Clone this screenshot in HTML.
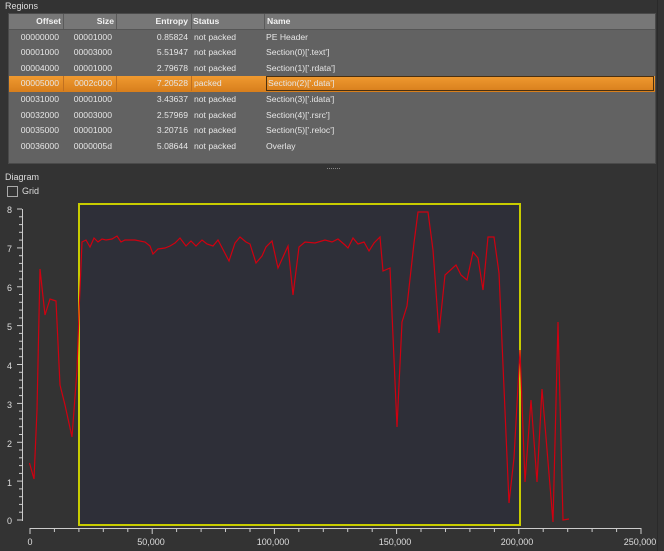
<!DOCTYPE html>
<html><head><meta charset="utf-8"><style>
body{margin:0;width:664px;height:551px;background:#333;font-family:"Liberation Sans",sans-serif;font-size:9px;color:#e6e6e6;position:relative;overflow:hidden}
.lbl{position:absolute;font-size:9px;color:#ddd}
#tbl{position:absolute;left:8px;top:13px;width:648px;height:151px;background:#626262;border:1px solid #4a4a4a;box-sizing:border-box;font-size:8.6px}
.hdr{position:absolute;left:0;top:0;width:100%;height:15px;background:#777;border-bottom:1px solid #555;font-weight:bold;color:#f2f2f2}
.row{position:absolute;left:0;width:100%;height:15.6px}
.c{position:absolute;top:2px;white-space:nowrap}
.sel{background:linear-gradient(#f09a30,#d77e1c)}
</style></head><body>
<div class="lbl" style="left:5px;top:1px">Regions</div>
<div id="tbl">
<div class="hdr">
<div class="c" style="right:594px">Offset</div>
<div class="c" style="right:541px">Size</div>
<div class="c" style="right:467px">Entropy</div>
<div class="c" style="left:184px">Status</div>
<div class="c" style="left:258px">Name</div>
<div style="position:absolute;left:54px;top:0;width:1px;height:15px;background:#5a5a5a"></div>
<div style="position:absolute;left:107px;top:0;width:1px;height:15px;background:#5a5a5a"></div>
<div style="position:absolute;left:182px;top:0;width:1px;height:15px;background:#5a5a5a"></div>
<div style="position:absolute;left:255px;top:0;width:1px;height:15px;background:#5a5a5a"></div>
</div>
</div>
<div style="position:absolute;left:327px;top:168px;width:13px;border-top:1px dotted #888"></div>
<div class="lbl" style="left:5px;top:172px">Diagram</div>
<div style="position:absolute;left:7px;top:186px;width:9px;height:9px;border:1px solid #aaa"></div>
<div class="lbl" style="left:22px;top:186px">Grid</div>
<div style="position:absolute;left:657px;top:0;width:1px;height:551px;background:#2a2a2a"></div>
<svg width="664" height="551" style="position:absolute;left:0;top:0" font-family="Liberation Sans" font-size="9" fill="#ddd">
<rect x="79" y="204" width="441" height="321" fill="#2e2f38" stroke="#c8cc00" stroke-width="2"/>
<g stroke="#ccc" stroke-width="1">
<line x1="22.5" y1="209" x2="22.5" y2="521"/>
<line x1="30" y1="528.5" x2="641" y2="528.5"/>
</g>
<g id="yt" stroke="#ccc"></g>
<g id="xt" stroke="#ccc"></g>
<g text-anchor="middle">
<text x="30" y="545">0</text><text x="151" y="545">50,000</text><text x="273" y="545">100,000</text><text x="395" y="545">150,000</text><text x="517" y="545">200,000</text><text x="640" y="545">250,000</text>
</g>
<g>
<text x="7" y="213">8</text><text x="7" y="252">7</text><text x="7" y="291">6</text><text x="7" y="330">5</text><text x="7" y="369">4</text><text x="7" y="408">3</text><text x="7" y="447">2</text><text x="7" y="486">1</text><text x="7" y="524">0</text>
</g>
<polyline fill="none" stroke="#d00010" stroke-width="1.2" points="29.5,463 34,479 37,410 40,269 45,315 50,299 56,301 60,385 65,405 72,437 77,370 79,312 82,242 86,240 90,247 94,238 98,242 102,239 106,240 112,239 117,236 121,242 125,240 130,240 135,240 145,242 150,246 153,254 158,249 165,248 170,246 175,243 180,238 186,246 191,241 196,246 202,240 207,244 213,246 218,240 229,261 235,243 240,237 246,242 250,244 256,263 262,256 266,247 272,241 278,268 288,246 293,295 299,247 305,242 315,243 325,240 332,242 338,239 345,245 348,248 353,238 358,244 364,242 369,251 374,243 380,237 383,271 390,268 397,427 402,322 407,306 414,243 418,212 428,212 433,250 439,333 445,275 456,265 461,275 467,280 473,252 478,258 483,290 488,237 494,237 499,273 509,503 514,458 520,350 525,482 531,400 537,482 542,389 553,522 558,322 563,520 569,519"/>
</svg>
<script>
var rows=[["00000000","00001000","0.85824","not packed","PE Header"],["00001000","00003000","5.51947","not packed","Section(0)['.text']"],["00004000","00001000","2.79678","not packed","Section(1)['.rdata']"],["00005000","0002c000","7.20528","packed","Section(2)['.data']"],["00031000","00001000","3.43637","not packed","Section(3)['.idata']"],["00032000","00003000","2.57969","not packed","Section(4)['.rsrc']"],["00035000","00001000","3.20716","not packed","Section(5)['.reloc']"],["00036000","0000005d","5.08644","not packed","Overlay"]];
var t=document.getElementById('tbl'),h='';
rows.forEach(function(r,i){var top=15.5+i*15.6;
h+='<div class="row'+(i==3?' sel':'')+'" style="top:'+top+'px">'+
(i==3?'<div style="position:absolute;left:54px;top:0;width:1px;height:15px;background:#c07020"></div><div style="position:absolute;left:107px;top:0;width:1px;height:15px;background:#c07020"></div><div style="position:absolute;left:182px;top:0;width:1px;height:15px;background:#c07020"></div>':'')+
'<div class="c" style="right:596px">'+r[0]+'</div><div class="c" style="right:543px">'+r[1]+'</div>'+
'<div class="c" style="right:467px">'+r[2]+'</div><div class="c" style="left:185px">'+r[3]+'</div>'+
'<div class="c" style="left:257px'+(i==3?';border:1px solid #4a3010;right:1px;top:0;padding-top:1px;padding-left:1px;height:12px':'')+'">'+r[4]+'</div></div>';});
t.insertAdjacentHTML('beforeend',h);
var ns='http://www.w3.org/2000/svg',yt=document.getElementById('yt'),xt=document.getElementById('xt');
for(var k=0;k<=40;k++){var y=209+k*311/40;var l=document.createElementNS(ns,'line');l.setAttribute('x1',k%5==0?17:19);l.setAttribute('x2',22);l.setAttribute('y1',y.toFixed(1));l.setAttribute('y2',y.toFixed(1));yt.appendChild(l);}
for(var k=0;k<=25;k++){var x=30+k*24.44;var l=document.createElementNS(ns,'line');l.setAttribute('x1',x.toFixed(1));l.setAttribute('x2',x.toFixed(1));l.setAttribute('y1',528);l.setAttribute('y2',k%5==0?534:532);xt.appendChild(l);}
</script>
</body></html>
